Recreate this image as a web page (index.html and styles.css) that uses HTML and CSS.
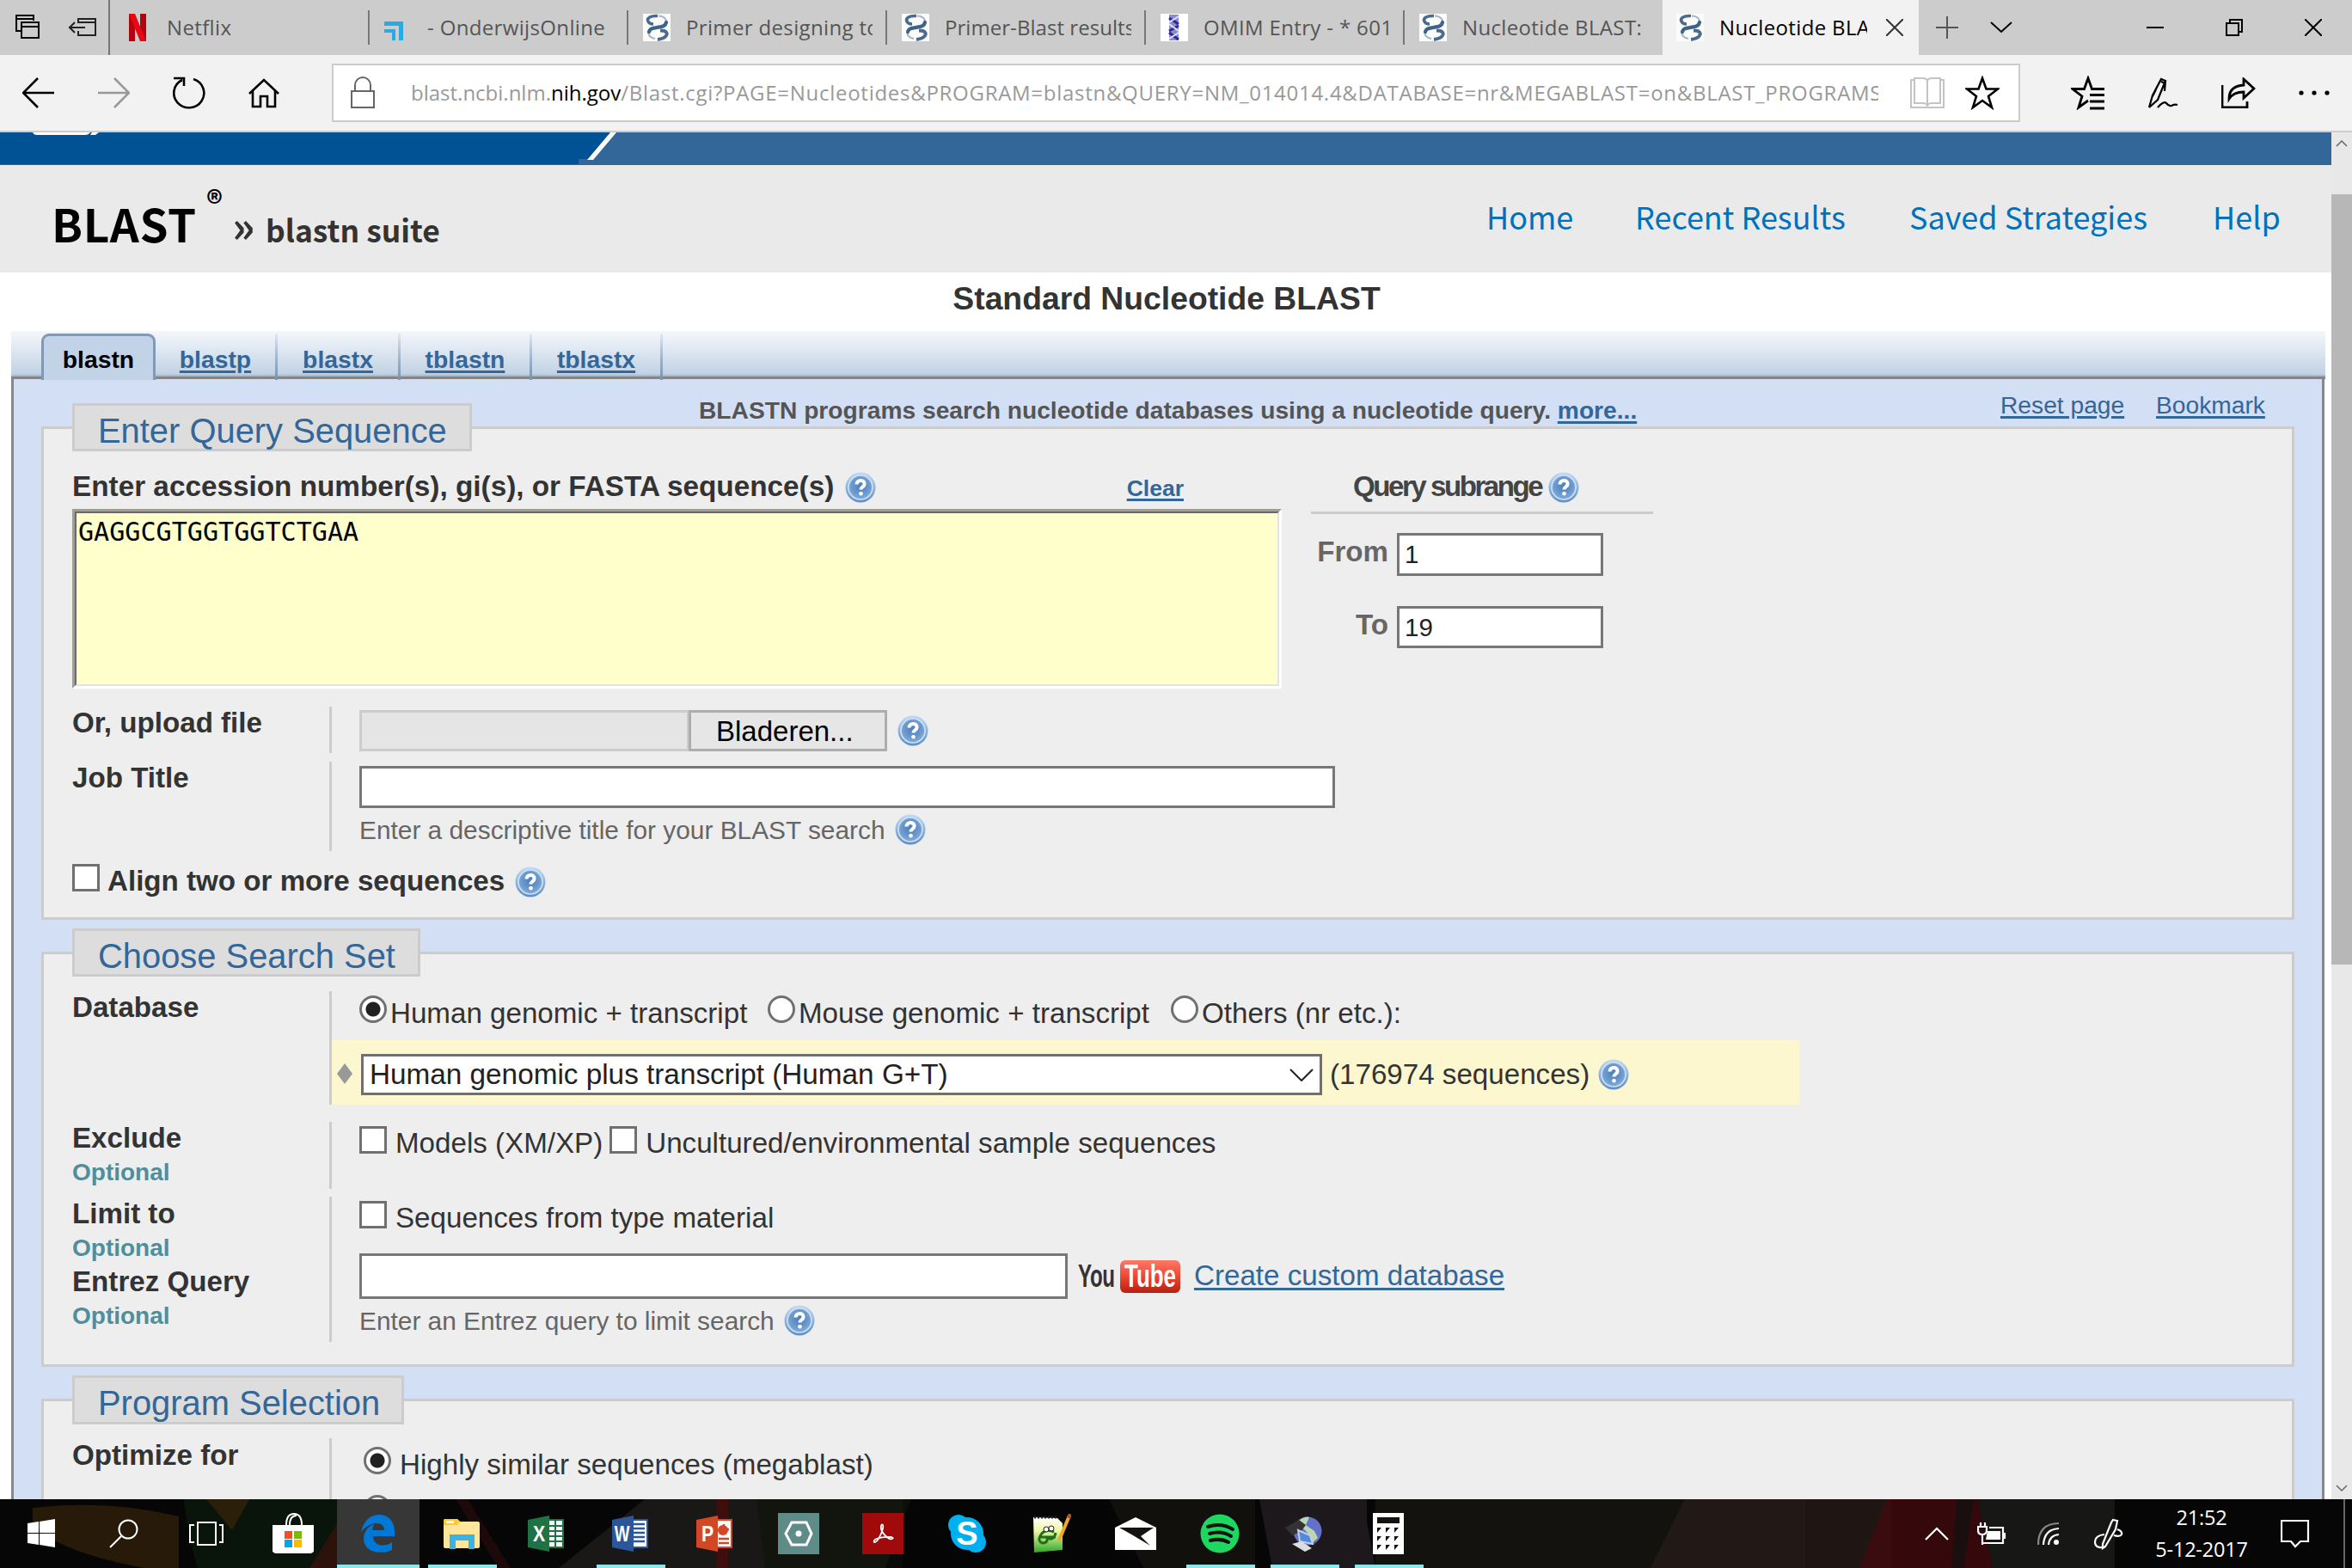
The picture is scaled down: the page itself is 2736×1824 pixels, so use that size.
FILE: index.html
```html
<!DOCTYPE html>
<html lang="en">
<head>
<meta charset="utf-8">
<title>Nucleotide BLAST</title>
<link rel="stylesheet" href="styles.css">
</head>
<body>
<svg class="defs" width="0" height="0" aria-hidden="true">
  <defs>
    <radialGradient id="hg" cx="50%" cy="45%" r="60%"><stop offset="0" stop-color="#4a7fbb"/><stop offset=".6" stop-color="#6a98cc"/><stop offset="1" stop-color="#86aedb"/></radialGradient>
    <linearGradient id="ho" x1="0" y1="0" x2="0" y2="1"><stop offset="0" stop-color="#c3daf5"/><stop offset="1" stop-color="#5d8ec6"/></linearGradient>
    <linearGradient id="yt" x1="0" y1="0" x2="0" y2="1"><stop offset="0" stop-color="#fd7a66"/><stop offset=".5" stop-color="#ee4634"/><stop offset="1" stop-color="#b81f10"/></linearGradient>
    <linearGradient id="np" x1="0" y1="0" x2="0" y2="1"><stop offset="0" stop-color="#fdfdfd"/><stop offset=".4" stop-color="#eef7a0"/><stop offset="1" stop-color="#2fa82a"/></linearGradient>
  </defs>
  <symbol id="help" viewBox="0 0 36 36">
    <circle cx="18" cy="18" r="17.500" fill="url(#ho)"/><circle cx="18" cy="18" r="14.800" fill="#cfe1f6"/><circle cx="18" cy="18" r="13.200" fill="url(#hg)"/>
    <path d="M13.600 14.400c0-6 9-5.800 9-.5 0 3.600-4.200 3.200-4.200 6.500" fill="none" stroke="#fff" stroke-width="4"/><rect x="16.200" y="23" width="4.600" height="4.400" rx="1.800" fill="#fff"/>
  </symbol>
  <symbol id="dna" viewBox="0 0 32 32">
    <rect width="32" height="32" fill="#fbfdfb"/>
    <path d="M18 2.500C25 3 29 7 26 12M7 20c-2 5 2 8 7 9" fill="none" stroke="#a5b6c8" stroke-width="2"/>
    <path d="M17 2.500C9 2 4 5 6 9c1 2 3 3 6 3" fill="none" stroke="#4a6b8e" stroke-width="3.600"/>
    <path d="M27 10c-1 5-5 5-11 6-5 1-8 1-9 5" fill="none" stroke="#3f6288" stroke-width="4.200" stroke-linecap="round"/>
    <path d="M20 19.500c7 0 9 3 7 6-2 3-6 4-10 4.500" fill="none" stroke="#4a6b8e" stroke-width="3.800"/>
  </symbol>
</svg>

<header class="tabbar">
  <div class="tabtools">
    <svg width="30" height="30" viewBox="0 0 30 30" fill="none" stroke="#000" stroke-width="2"><path d="M8 19H2V1h20v6M2 5h20"/><path d="M8 9h20v18H8zM8 14h20"/></svg>
    <svg width="34" height="24" viewBox="0 0 34 24" fill="none" stroke="#222" stroke-width="2"><path d="M12 7V2h20v19H12v-5M12 6h20M1 12h19M8 6l-6 6 6 6"/></svg>
  </div>
  <div class="tab first"><svg class="fav" viewBox="0 0 32 32"><path d="M4 0h7v32l-7 0zM17 0h7v32h-7z" fill="#b1060f"/><path d="M4 0h7l13 32h-7z" fill="#e50914"/></svg><span class="tt">Netflix</span></div>
  <div class="tab"><svg class="fav" viewBox="0 0 32 32"><path d="M0 9h22v22h-5V14H0z" fill="#29abe2"/><path d="M0 18h13v13H9v-9H0z" fill="#29abe2"/></svg><span class="tt">- OnderwijsOnline</span></div>
  <div class="tab"><svg class="fav"><use href="#dna"/></svg><span class="tt">Primer designing to</span></div>
  <div class="tab"><svg class="fav"><use href="#dna"/></svg><span class="tt tight">Primer-Blast results</span></div>
  <div class="tab"><svg class="fav" viewBox="0 0 32 32"><path d="M0 0h32v32H0z" fill="#fff"/><path d="M10 1h11v30H10z" fill="#8c8ccc"/><path d="M10 5l11 7M21 14l-11 6M10 22l11 8" stroke="#2a2a9a" stroke-width="3"/><path d="M21 3L10 10M10 12l11 8M21 22l-11 7" stroke="#e4e4ff" stroke-width="2"/></svg><span class="tt">OMIM Entry - * 601</span></div>
  <div class="tab last"><svg class="fav"><use href="#dna"/></svg><span class="tt">Nucleotide BLAST:</span></div>
  <div class="tab active"><svg class="fav"><use href="#dna"/></svg><span class="tt">Nucleotide BLA</span><svg class="x" viewBox="0 0 20 20"><path d="M0 0l20 20M20 0L0 20"/></svg></div>
  <div class="winbtns">
    <svg width="26" height="26" viewBox="0 0 26 26"><path d="M13 0v26M0 13h26" stroke="#555"/></svg>
    <svg width="26" height="14" viewBox="0 0 26 14"><path d="M1 1l12 11L25 1"/></svg>
    <svg class="min" width="20" height="20" viewBox="0 0 20 20"><path d="M0 10h20"/></svg>
    <svg width="20" height="20" viewBox="0 0 20 20"><path d="M1 5h14v14H1zM5 5V1h14v14h-4"/></svg>
    <svg width="20" height="20" viewBox="0 0 20 20"><path d="M0 0l20 20M20 0L0 20"/></svg>
  </div>
</header>

<div class="toolbar">
  <div class="navbtns">
    <svg width="38" height="36" viewBox="0 0 38 36"><path d="M37 18H2M18 1L1 18l17 17"/></svg>
    <svg class="dim" width="38" height="36" viewBox="0 0 38 36"><path d="M1 18h35M20 1l17 17-17 17"/></svg>
    <svg width="40" height="38" viewBox="0 0 40 38"><path d="M25 3a17.5 17 0 1 1-13 1M2 2h12v9"/></svg>
    <svg width="36" height="36" viewBox="0 0 36 36"><path d="M1 19L18 3l17 16M5 16v18h9V22h8v12h9V16"/></svg>
  </div>
  <div class="urlbox">
    <svg width="28" height="38" viewBox="0 0 28 38" fill="none" stroke="#666" stroke-width="2"><path d="M1 17h26v19H1zM5 17v-7a9 9 0 0 1 18 0v7"/></svg>
    <div class="url"><span class="u1">blast.ncbi.nlm.</span><span class="host">nih.gov</span><span class="u2">/Blast.cgi?PAGE=Nucleotides&amp;PROGRAM=blastn&amp;QUERY=NM_014014.4&amp;DATABASE=nr&amp;MEGABLAST=on&amp;BLAST_PROGRAMS</span></div>
    <svg class="book" width="40" height="36" viewBox="0 0 40 36" fill="none" stroke="#c4c4c4" stroke-width="2"><path d="M5 3H1v32h38V3h-4M5 1h10q4 0 5 3 1-3 5-3h10v29H25q-4 0-5 3-1-3-5-3H5zM20 4v29"/></svg>
    <svg class="star" width="40" height="40" viewBox="0 0 40 40"><path d="M20 3l4.5 12.5H38L27 24l4 13-11-8-11 8 4-13L2 15.500h13.500z"/></svg>
  </div>
  <div class="actions">
    <svg width="40" height="40" viewBox="0 0 40 40"><path d="M20 29L9 37l4-13L2 15.500h13.500L20 3l4.500 12.500H39M22 22.500h17M22 30h17M22 38h17"/></svg>
    <svg width="36" height="38" viewBox="0 0 36 38"><path d="M1 36l4-14L15 3l5 2-9 22L1 36M15 6l5 2M9 15l-4 8M20 5l-1 12M11 36q7-8 10-5 3 4 6 3 4-2 7-1" stroke-width="2.200"/></svg>
    <svg width="40" height="36" viewBox="0 0 40 36"><path d="M1 9v26h29v-7M9 25q0-15 17-16V2l12 11-12 11v-7q-12 0-17 8z"/></svg>
    <svg width="36" height="6" viewBox="0 0 36 6"><g fill="#000" stroke="none"><circle cx="3" cy="3" r="2.600"/><circle cx="18" cy="3" r="2.600"/><circle cx="33" cy="3" r="2.600"/></g></svg>
  </div>
</div>

<div class="viewport">
  <main class="page">
    <svg class="ncbi" viewBox="0 0 2712 38" width="2712" height="38"><path d="M0 0h2712v38H0z" fill="#336699"/><path d="M0 0h711l-27 31h-11v6H0z" fill="#005295"/><path d="M710 0h7l-27 32h-7z" fill="#fff"/><path d="M38 0h67q-2 3-6 3H43q-4 0-5-3zM107 0h8l-4 3h-6z" fill="#fff"/></svg>
    <div class="mast">
      <div class="brand"><b class="bl">BLAST</b><span class="reg">®</span><span class="crumb"><span class="raq">»</span><span>blastn suite</span></span></div>
      <nav class="topnav"><a>Home</a><a>Recent Results</a><a>Saved Strategies</a><a>Help</a></nav>
    </div>
    <h1>Standard Nucleotide BLAST</h1>

    <div class="strip">
      <div class="ptab on"><span>blastn</span></div><div class="ptab p2"><span>blastp</span></div><div class="ptab p3"><span>blastx</span></div><div class="ptab p4"><span>tblastn</span></div><div class="ptab p5"><span>tblastx</span></div>
    </div>
    <div class="panel">
      <div class="intro"><p>BLASTN programs search nucleotide databases using a nucleotide query. <a>more...</a></p><a class="reset">Reset page</a><a>Bookmark</a></div>

      <section class="box query">
        <h2>Enter Query Sequence</h2>
        <div class="qtop">
          <div class="qleft">
            <div class="qhead"><b>Enter accession number(s), gi(s), or FASTA sequence(s)</b><svg class="h"><use href="#help"/></svg><a class="clear">Clear</a></div>
            <div class="seq"><div>GAGGCGTGGTGGTCTGAA</div></div>
          </div>
          <div class="range">
            <div class="rhead"><b>Query subrange</b><svg class="h"><use href="#help"/></svg></div>
            <div class="rr"><b>From</b><div class="inp">1</div></div>
            <div class="rr"><b>To</b><div class="inp">19</div></div>
          </div>
        </div>
        <div class="row upload"><b>Or, upload file</b><div class="fld"><div class="file"></div><div class="btn">Bladeren...</div><svg class="h"><use href="#help"/></svg></div></div>
        <div class="row job"><b>Job Title</b><div class="fld"><div class="inp wide"></div><div class="hint">Enter a descriptive title for your BLAST search<svg class="h"><use href="#help"/></svg></div></div></div>
        <div class="align"><i class="cb"></i><b>Align two or more sequences</b><svg class="h"><use href="#help"/></svg></div>
      </section>

      <section class="box sets">
        <h2>Choose Search Set</h2>
        <div class="row db"><b>Database</b><div class="fld">
          <div class="radios"><span class="o o1"><i class="rd sel"></i>Human genomic + transcript</span><span class="o o2"><i class="rd"></i>Mouse genomic + transcript</span><span class="o"><i class="rd"></i>Others (nr etc.):</span></div>
          <div class="dbsel"><svg class="dia" viewBox="0 0 18 24"><path d="M9 0l9 12-9 12L0 12z" fill="#999"/></svg><div class="select"><span>Human genomic plus transcript (Human G+T)</span><svg width="28" height="15" viewBox="0 0 28 15"><path d="M1 1l13 13L27 1" fill="none" stroke="#222" stroke-width="2"/></svg></div><span class="cnt">(176974 sequences)</span><svg class="h"><use href="#help"/></svg></div>
        </div></div>
        <div class="row ex"><div class="lab"><b>Exclude</b><em>Optional</em></div><div class="fld"><i class="cb"></i><span class="m1">Models (XM/XP)</span><i class="cb"></i><span>Uncultured/environmental sample sequences</span></div></div>
        <div class="row li"><div class="lab"><b>Limit to</b><em>Optional</em></div><div class="fld"><i class="cb"></i><span>Sequences from type material</span></div></div>
        <div class="row en"><div class="lab"><b>Entrez Query</b><em>Optional</em></div><div class="fld"><div class="enl"><div class="inp ent"></div><div class="yt"><span>You</span><svg viewBox="0 0 70 38" width="70" height="38"><rect width="70" height="38" rx="6" fill="url(#yt)"/></svg><span class="tube">Tube</span></div><a>Create custom database</a></div><div class="hint">Enter an Entrez query to limit search<svg class="h"><use href="#help"/></svg></div></div></div>
      </section>

      <section class="box prog">
        <h2>Program Selection</h2>
        <div class="row op"><b>Optimize for</b><div class="fld"><div class="opt"><i class="rd sel"></i><span>Highly similar sequences (megablast)</span></div><div class="opt"><i class="rd"></i></div></div></div>
      </section>
    </div>
  </main>
  <aside class="scroll">
    <svg width="14" height="9" viewBox="0 0 14 9"><path d="M1 8l6-6 6 6"/></svg><div class="thumb"></div><svg width="14" height="9" viewBox="0 0 14 9"><path d="M1 1l6 6 6-6"/></svg>
  </aside>
</div>

<footer class="taskbar">
  <svg class="wall" viewBox="0 0 2736 80" preserveAspectRatio="none"><path d="M0 0h2736v80H0z" fill="#060606"/><path d="M38 10q90-10 170 10v60h-40Q60 60 38 26z" fill="#33220a"/><path d="M214 0h250l-70 80H230q-10-30-16-80z" fill="#0b1a0d"/><path d="M240 0h50l-20 36z" fill="#38230a"/><path d="M410 0h50l-60 80h-40z" fill="#3a120c"/><path d="M530 0h14l50 80h-14z" fill="#260b0c"/><path d="M750 0h300v80H650z" fill="#201f1d"/><path d="M834 0h13v80h-13z" fill="#4b0a0a"/><path d="M880 0h180l-30 80H890z" fill="#10140c"/><path d="M1060 0h220l60 80H1030z" fill="#050505"/><path d="M1290 0h170v80h-130z" fill="#15140f"/><path d="M1465 0h125v26l10 54h-120z" fill="#261f23"/><path d="M1600 0h500v80h-500z" fill="#181713"/><path d="M1960 0h240v80h-280z" fill="#281c1a"/><path d="M2195 0h105l18 80h-155z" fill="#450a0e"/><path d="M2276 0h20l-12 80h-14z" fill="#111"/><path d="M2300 0h160v80h-142z" fill="#1e1f1b"/></svg>
  <div class="items">
    <div class="ti sys"><svg width="34" height="34" viewBox="0 0 34 34"><path d="M1 5l13-2v13H1zM15 3l18-3v16H15zM1 17h13v13L1 28zM15 17h18v16l-18-3z" fill="#fff"/></svg></div>
    <div class="ti sys"><svg width="34" height="34" viewBox="0 0 34 34" fill="none" stroke="#fff" stroke-width="2"><circle cx="22" cy="12" r="10.500"/><path d="M14 20L1 33"/></svg></div>
    <div class="ti sys tv"><svg width="40" height="30" viewBox="0 0 40 30" fill="none" stroke="#fff" stroke-width="2"><path d="M10 2h21v26H10zM6 5H1v20h5M35 5h4v20h-4"/></svg></div>
    <div class="ti"><svg width="48" height="48" viewBox="0 0 48 48"><path d="M0 14h48v31l-3 2H3l-3-2z" fill="#fff"/><path d="M16 14q0-13 9-13t9 13M20 14q0-11 8-11" fill="none" stroke="#fff" stroke-width="2"/><path d="M14 21h9v9h-9z" fill="#f25022"/><path d="M25 21h9v9h-9z" fill="#7fba00"/><path d="M14 31h9v9h-9z" fill="#00a4ef"/><path d="M25 31h9v9h-9z" fill="#ffb900"/></svg></div>
    <div class="ti cur"><svg width="40" height="44" viewBox="0 0 40 44"><path d="M0 20C3 7 11 0 21 0c12 0 18 9 18 20v5H14c0 12 14 13 22 7v9c-13 6-33 3-33-13C3 19 9 13 16 11c-2 2-3 4-3 7h14c0-11-16-11-27 2z" fill="#0078d7"/></svg></div>
    <div class="ti run"><svg width="44" height="36" viewBox="0 0 44 36"><path d="M1 3q0-2 2-2h14l3 3h21q2 0 2 2v27q0 2-2 2H3q-2 0-2-2z" fill="#ffe69a"/><path d="M1 3q0-2 2-2h14l3 3-3 4H1z" fill="#ffc933"/><path d="M4 3h9v3H4z" fill="#fff"/><path d="M8 19h29v17h-7V26H15v10H8z" fill="#3ab3e6"/></svg></div>
    <div class="ti"><svg width="42" height="42" viewBox="0 0 42 42"><path d="M24 5h17v32H24z" fill="#fff" stroke="#1f7244" stroke-width="2"/><path d="M24 12h16M24 18h16M24 24h16M24 30h16M32 6v30" stroke="#1f7244" stroke-width="2"/><path d="M0 5L25 0v42L0 37z" fill="#1f7244"/></svg><span class="ltr">X</span></div>
    <div class="ti run"><svg width="42" height="42" viewBox="0 0 42 42"><path d="M24 5h17v32H24z" fill="#fff" stroke="#2b579a" stroke-width="2"/><path d="M24 10h14M24 15h14M24 20h14M24 25h14M24 30h14" stroke="#2b579a" stroke-width="2.500"/><path d="M0 5L25 0v42L0 37z" fill="#2b579a"/></svg><span class="ltr w">W</span></div>
    <div class="ti"><svg width="42" height="42" viewBox="0 0 42 42"><path d="M24 5h17v32H24z" fill="#fff" stroke="#d24726" stroke-width="2"/><circle cx="31" cy="17" r="6" fill="#d24726"/><path d="M32 10v6h6M26 27h12M26 32h12" stroke="#d24726" stroke-width="2.500" fill="none"/><path d="M0 5L25 0v42L0 37z" fill="#d24726"/></svg><span class="ltr">P</span></div>
    <div class="ti"><svg width="48" height="48" viewBox="0 0 48 48"><path d="M0 0h48v48H0z" fill="#5f8b89"/><path d="M16 11h17l6 13-6 13H16L9 24z" fill="none" stroke="#fff" stroke-width="3"/><circle cx="24" cy="24" r="3.500" fill="#fff"/></svg></div>
    <div class="ti"><svg width="48" height="48" viewBox="0 0 48 48"><path d="M0 0h48v48H0z" fill="#a00a0a"/><path d="M14 34c-2-3 6-7 20-6 4 1 0 4-4 1-6-4-9-10-8-14 1-3 3-1 2 3-2 8-7 17-10 16z" fill="none" stroke="#fff" stroke-width="1.800"/></svg></div>
    <div class="ti"><svg width="44" height="44" viewBox="0 0 44 44"><circle cx="22" cy="22" r="19" fill="#00aff0"/><circle cx="12" cy="12" r="12" fill="#00aff0"/><circle cx="32" cy="32" r="12" fill="#00aff0"/></svg><span class="ltr sk">S</span></div>
    <div class="ti"><svg width="46" height="46" viewBox="0 0 46 46"><path d="M2 4l28 1 6 6v31L3 45z" fill="url(#np)"/><path d="M3 4h26" stroke="#222" stroke-width="3" stroke-dasharray="2 2"/><path d="M26 21q-10-4-15 3-5 8 2 10 6 0 5-6 8 4 10-6M10 27h18" fill="none" stroke="#1e6f1a" stroke-width="3"/><circle cx="17" cy="18" r="3" fill="#fff" stroke="#222"/><circle cx="23" cy="17" r="3" fill="#fff" stroke="#222"/><path d="M44 2L32 31" stroke="#f0a920" stroke-width="4"/><path d="M45 0l-2 5" stroke="#b0522c" stroke-width="4"/></svg></div>
    <div class="ti"><svg width="48" height="38" viewBox="0 0 48 38"><path d="M0 12L24 0l24 12v26H0z" fill="#fff"/><path d="M5 12h40L30 22l11 11-20-12z" fill="#14130f"/></svg></div>
    <div class="ti run"><svg width="46" height="46" viewBox="0 0 46 46"><circle cx="23" cy="23" r="22.500" fill="#1ed760"/><path d="M9 15q16-5 29 3M11 23q14-4 25 3M12 31q12-3 21 2" fill="none" stroke="#0d130f" stroke-width="4" stroke-linecap="round"/></svg></div>
    <div class="ti run"><svg width="44" height="42" viewBox="0 0 44 42"><circle cx="26" cy="18" r="16.500" fill="#6372c8"/><path d="M14 8q8-8 14-6l-4 9 10 7 4 8-8 7-4-13z" fill="#b9d8b0"/><path d="M0 14l16-9 8 6-6 8-10 4z" fill="#333"/><path d="M15 17l14 6 3 10-15-3z" fill="#4f8ce0" stroke="#ccd" stroke-width="2"/><path d="M8 33l11-3 12 8-8 4z" fill="#ddd"/></svg></div>
    <div class="ti run"><svg width="36" height="48" viewBox="0 0 36 48"><path d="M0 0h36v48H0z" fill="#fff"/><path d="M5 5h26v7H5zM5 17h5l-5 6zM15 17h5l-5 6zM25 17h5l-5 6zM5 27h5l-5 6zM15 27h5l-5 6zM25 27h5l-5 6zM5 37h5l-5 6zM15 37h5l-5 6zM25 37h5l-5 6z" fill="#14130f"/></svg></div>
  </div>
  <div class="tray">
    <svg width="28" height="16" viewBox="0 0 28 16"><path d="M1 15L14 2l13 13"/></svg>
    <svg class="bat" width="34" height="26" viewBox="0 0 34 26"><path d="M14 6h16v18H7M4 0v5M9 0v5M1 5h10v4q0 5-5 5t-5-5zM6 14v12M32 12v7"/><path d="M12 10h15v10H10z" fill="#fff" stroke="none"/></svg>
    <svg class="wifi" width="26" height="28" viewBox="0 0 26 28"><path d="M1 27Q1 2 25 2" stroke="#888"/><path d="M7 27Q8 9 25 8M13 27q1-11 12-12"/><circle cx="22" cy="24" r="3" fill="#fff" stroke="none"/></svg>
    <svg width="34" height="38" viewBox="0 0 34 38"><path d="M22 3l5 1-2 10-12 20-3 2V31L20 6zM12 20q-11 1-11 9 0 7 10 6M27 14q6 2 5 6-2 3-9 1"/></svg>
    <div class="clock"><span>21:52</span><span>5-12-2017</span></div>
    <svg width="34" height="34" viewBox="0 0 34 34"><path d="M1 2h31v24h-9l-6 6-5-6H1z"/></svg>
  </div>
</footer>
</body>
</html>
```
FILE: styles.css
```css
* { box-sizing: border-box; }
body { margin: 0; width: 2736px; height: 1824px; overflow: hidden; display: flex; flex-direction: column; background: #fff; font-family: "Liberation Sans", Arial, sans-serif; font-size: 33.15px; line-height: 40px; color: #333; }
.defs { position: absolute; }
svg { display: block; flex: none; }
i, em { font-style: normal; }

/* browser tabs */
.tabbar { height: 64px; flex: none; display: flex; background: #ccc; font-family: "Open Sans", "Noto Sans", sans-serif; font-size: 24px; color: #555; }
.tabtools { width: 128px; flex: none; border-right: 2px solid #777; display: flex; align-items: center; padding-left: 17px; gap: 32px; }
.tab { width: 301px; flex: none; display: flex; align-items: center; padding: 0 16px 0 18px; position: relative; }
.tab:not(.last):not(.active)::after { content: ""; position: absolute; right: -1px; top: 12px; width: 2px; height: 40px; background: #777; }
.fav { width: 32px; height: 32px; margin-right: 18px; }
.tab.first .fav { margin-right: 16px; }
.tt { flex: 1; overflow: hidden; white-space: nowrap; letter-spacing: .35px; line-height: 40px; }
.tt.tight { letter-spacing: .05px; }
.tab.active { width: 298px; background: #f2f2f2; color: #000; padding: 0 18px 0 16px; }
.x { width: 20px; height: 20px; margin-left: 22px; stroke: #333; stroke-width: 2; }
.winbtns { display: flex; flex: none; align-items: center; padding-left: 20px; fill: none; stroke: #000; stroke-width: 2; }
.winbtns svg { margin-right: 37px; }
.winbtns .min { margin-left: 119px; margin-right: 72px; }
.winbtns .min ~ svg { margin-right: 72px; }

/* address bar */
.toolbar { height: 90px; flex: none; background: #f2f2f2; border-bottom: 2px solid #ccc; display: flex; align-items: center; }
.navbtns { width: 386px; display: flex; align-items: center; padding-left: 26px; fill: none; stroke: #000; stroke-width: 2.6; gap: 49px; }
.navbtns .dim { stroke: #999; }
.urlbox { width: 1964px; height: 68px; background: #fff; border: 2px solid #ccc; display: flex; align-items: center; padding-left: 20px; }
.url { width: 1707px; margin-left: 42px; overflow: hidden; white-space: nowrap; font: 24px/40px "Open Sans", "Noto Sans", sans-serif; color: #999; }
.host { color: #000; }
.u2 { letter-spacing: .72px; }
.book { margin-left: 37px; }
.star { margin-left: 24px; fill: none; stroke: #000; stroke-width: 2.6; }
.actions { flex: 1; display: flex; align-items: center; justify-content: space-between; padding: 0 26px 0 59px; fill: none; stroke: #000; stroke-width: 2.8; }

/* page */
.viewport { height: 1590px; flex: none; display: flex; overflow: hidden; }
.page { width: 2712px; overflow: hidden; }
.mast { height: 125px; background: #eaeaea; display: flex; font-family: "Noto Sans CJK SC", sans-serif; }
.brand { width: 1729px; padding-left: 60px; display: flex; }
.bl { width: 180px; color: #000; font-size: 53px; line-height: 60px; padding-top: 37px; letter-spacing: .7px; }
.reg { width: 30px; color: #000; font-size: 37px; font-weight: 700; line-height: 40px; padding-top: 22px; }
.crumb { display: flex; gap: 11px; align-items: baseline; font-size: 35.4px; font-weight: 700; line-height: 60px; padding-top: 45px; }
.raq { width: 28px; font-size: 50px; line-height: 40px; }
.topnav { display: grid; grid-template-columns: 173px 319px 353px auto; font-size: 36px; line-height: 60px; padding-top: 29px; white-space: nowrap; }
h1 { margin: 0; height: 68px; padding: 10px 0 0 2px; text-align: center; font-size: 37.3px; line-height: 40px; }

.strip { height: 56px; margin: 0 7px 0 13px; display: flex; padding-left: 35px; background: linear-gradient(#f4f7fb, #dfe8f3 40%, #c2d2e4 94%, #9cb0c6); border-bottom: 3px solid #858585; font-size: 28.3px; font-weight: 700; color: #336699; }
.ptab { height: 54px; padding-top: 10px; margin-top: 3px; border-right: 3px solid; border-image: linear-gradient(rgba(123,149,181,.1), #7b95b5) 1; text-align: center; position: relative; text-decoration: underline; text-decoration-thickness: 3px; text-underline-offset: 3px; }
.ptab.on { width: 133px; background: #c2d3e8; border: 3px solid #8199b5; border-bottom: 0; border-image: none; border-radius: 9px 9px 0 0; padding-top: 7px; color: #000; text-decoration: none; }
.p2 { width: 142px; }
.p3 { width: 143px; }
.p4 { width: 153px; }
.p5 { width: 152px; }

.panel { margin: 0 8px 0 13px; height: 1400px; background: #d3dff5; border: solid #888; border-width: 0 3px; padding: 0 32px; }
.intro { height: 55px; display: flex; font-size: 28.2px; color: #555; }
.intro p { margin: 0; flex: none; width: 1513px; padding: 16px 0 0 765px; font-weight: 700; white-space: nowrap; }
a { color: #336699; text-decoration: underline; text-decoration-thickness: 3px; text-underline-offset: 3px; white-space: nowrap; }
.topnav a { color: #0071bc; text-decoration: none; }
.intro > a { padding-top: 10px; width: 181px; flex: none; }
.intro > .reset { margin-left: 766px; }
.box { background: #eee; border: 3px solid #ccc; padding-left: 33px; }
.query { height: 574px; }
.sets { height: 483px; margin-top: 37px; }
.prog { height: 300px; margin-top: 37px; }
h2 { margin: -30px 0 0; width: 465px; height: 56px; background: #ddd; border: 3px solid #ccc; padding-left: 27px; font-size: 39.9px; font-weight: 400; line-height: 40px; padding-top: 9px; color: #336699; white-space: nowrap; }
.sets h2 { width: 405px; }
.prog h2 { width: 386px; height: 57px; }
.h { width: 36px; height: 36px; }
b { white-space: nowrap; }

.qtop { display: flex; gap: 34px; height: 276px; }
.qleft { width: 1407px; }
.qhead { height: 67px; padding-top: 21px; display: flex; font-size: 33.3px; }
.qhead .h { margin: 3px 0 0 13px; }
.clear { font-size: 26.5px; font-weight: 700; margin: 2px 0 0 auto; padding-right: 114px; }
.seq { height: 209px; border: 3px solid; border-color: #9f9f97 #fff #fff #9f9f97; }
.seq div { height: 100%; border: 2px solid; border-color: #696969 #e3e3e3 #e3e3e3 #696969; background: #ffc; color: #000; padding: 2px 2px; font: 30.1px/40px "DejaVu Sans Mono", monospace; }
.range { width: 398px; }
.rhead { height: 73px; border-bottom: 3px solid #ccc; padding: 21px 0 0 49px; display: flex; letter-spacing: -2.5px; color: #444; }
.rhead .h { margin: 3px 0 0 8px; }
.rr { display: flex; justify-content: flex-end; gap: 10px; margin: 22px 58px 35px 0; height: 50px; color: #666; }
.rr + .rr { height: 49px; }
.rr b { padding-top: 2px; }
.inp { background: #fff; border: 3px solid #777; width: 240px; height: 100%; padding: 0 6px; font-size: 29.5px; line-height: 44px; color: #222; }
.row { display: grid; grid-template-columns: 299px 1fr; }
.fld { border-left: 3px solid #ccc; padding-left: 32px; }
.upload { height: 54px; margin-top: 21px; }
.upload > b, .job > b, .db > b { margin-top: -1px; }
.upload .fld { display: flex; align-items: center; padding-top: 1px; }
.file { width: 384px; height: 48px; background: #e5e5e5; border: 3px solid #ccc; }
.btn { width: 231px; height: 48px; margin-left: -1px; margin-right: 12px; background: #e6e6e6; border: 3px solid #adadad; color: #000; font-size: 33px; line-height: 44px; padding-left: 29px; }
.job { height: 104px; margin-top: 10px; }
.inp.wide { width: 1135px; height: 49px; margin-top: 5px; }
.hint { font-size: 29.85px; color: #666; display: flex; gap: 11px; padding-top: 6px; }
.hint .h { margin-top: 1px; }
.align { display: flex; margin-top: 15px; }
.cb { width: 32px; height: 32px; border: 3px solid #707070; background: #fff; flex: none; }
.align b { margin-left: 9px; }
.align .h { margin: 3px 0 0 12px; }

.db { height: 132px; margin-top: 17px; }
.fld span { white-space: nowrap; }
.radios { display: flex; height: 57px; padding-top: 5px; }
.o { display: flex; gap: 4px; line-height: 41px; }
.o1 { width: 475px; }
.o2 { width: 469px; }
.rd { width: 32px; height: 32px; border: 3px solid #707070; border-radius: 50%; background: #fff; flex: none; }
.sel { background: radial-gradient(circle, #222 8px, #fff 9px); }
.dbsel { margin-left: -32px; width: 1707px; height: 75px; background: #fdf7cf; display: flex; align-items: center; padding-left: 6px; }
.dia { width: 18px; height: 24px; margin-right: 10px; margin-top: 2px; }
.select { width: 1118px; height: 48px; margin-top: 5px; background: #fff; border: 3px solid #707070; display: flex; align-items: center; justify-content: space-between; padding: 0 7px 0 7px; color: #222; font-size: 33.3px; }
.cnt { margin: 4px 10px 0 9px; }
.dbsel .h { margin-top: 5px; }
.lab { display: flex; flex-direction: column; }
.lab em { font-size: 28px; font-weight: 700; color: #4f8f9c; line-height: 38px; margin-top: 1px; }
.ex, .li { height: 51px; margin-top: 20px; }
.ex .lab { margin-top: -1px; }
.li { margin-top: 36px; }
.ex .fld, .li .fld { display: flex; padding-top: 5px; gap: 10px; }
.ex .m1 { margin-right: -2px; }
.en { height: 108px; margin-top: 10px; }
.en .lab { padding-top: 18px; }
.enl { display: flex; padding-top: 5px; align-items: center; }
.enl > a { margin-top: -1px; }
.inp.ent { width: 824px; height: 53px; }
.yt { width: 119px; height: 38px; margin: 0 16px 0 12px; display: flex; position: relative; font: 700 36px/38px "Liberation Sans", sans-serif; color: #333; }
.yt > span:first-child { width: 49px; transform: scaleX(.67); transform-origin: 0 0; letter-spacing: -.5px; }
.yt .tube { position: absolute; left: 54px; top: 0; color: #fff; transform: scaleX(.72); transform-origin: 0 0; }
.op { height: 120px; margin-top: 16px; }
.opt { display: flex; gap: 10px; padding: 10px 0 0 5px; height: 56px; line-height: 42px; }
.scroll { width: 24px; background: #e8e8e8; display: flex; flex-direction: column; align-items: center; padding: 8px 0; fill: none; stroke: #666; stroke-width: 1.5; }
.thumb { width: 24px; height: 896px; margin: 55px 0 auto; background: #b7b7b7; }

/* taskbar */
.taskbar { height: 80px; flex: none; position: relative; display: flex; justify-content: space-between; }
.wall { position: absolute; width: 100%; height: 100%; }
.wall path + path { opacity: .75; }
.items { display: flex; position: relative; }
.ti { width: 98px; height: 80px; display: flex; align-items: center; justify-content: center; position: relative; }
.ti.sys { width: 96px; }
.ti.tv { margin-right: 4px; }
.cur { background: #373737; }
.cur::after, .run::after { content: ""; position: absolute; left: 10px; bottom: 0; width: 80px; height: 4px; background: #8de7ea; }
.ti.cur { width: 96px; margin: 0 0 0 2px; }
.cur::after { left: 0; width: 96px; }
.ltr { position: absolute; left: 30px; top: 20px; width: 22px; text-align: center; color: #fff; font: 700 25px/40px "Liberation Sans", sans-serif; transform: scaleX(.85); }
.ltr.w { left: 28px; transform: scaleX(.75); }
.sk { left: 27px; width: 44px; font-size: 38px; top: 20px; transform: none; }
.tray { position: relative; display: flex; align-items: center; padding-right: 49px; fill: none; stroke: #fff; stroke-width: 2.2; }
.tray svg { margin-right: 33px; }
.tray .bat { margin-right: 36px; }
.tray .wifi { margin-right: 40px; }
.tray svg:last-child { margin: 0; }
.tray::after { content: ""; position: absolute; right: 8px; top: 0; width: 2px; height: 80px; background: #666; }
.clock { width: 116px; display: flex; flex-direction: column; align-items: center; margin-right: 34px; color: #fff; font: 23.5px/37px "Open Sans", sans-serif; letter-spacing: -.2px; white-space: nowrap; }
```
